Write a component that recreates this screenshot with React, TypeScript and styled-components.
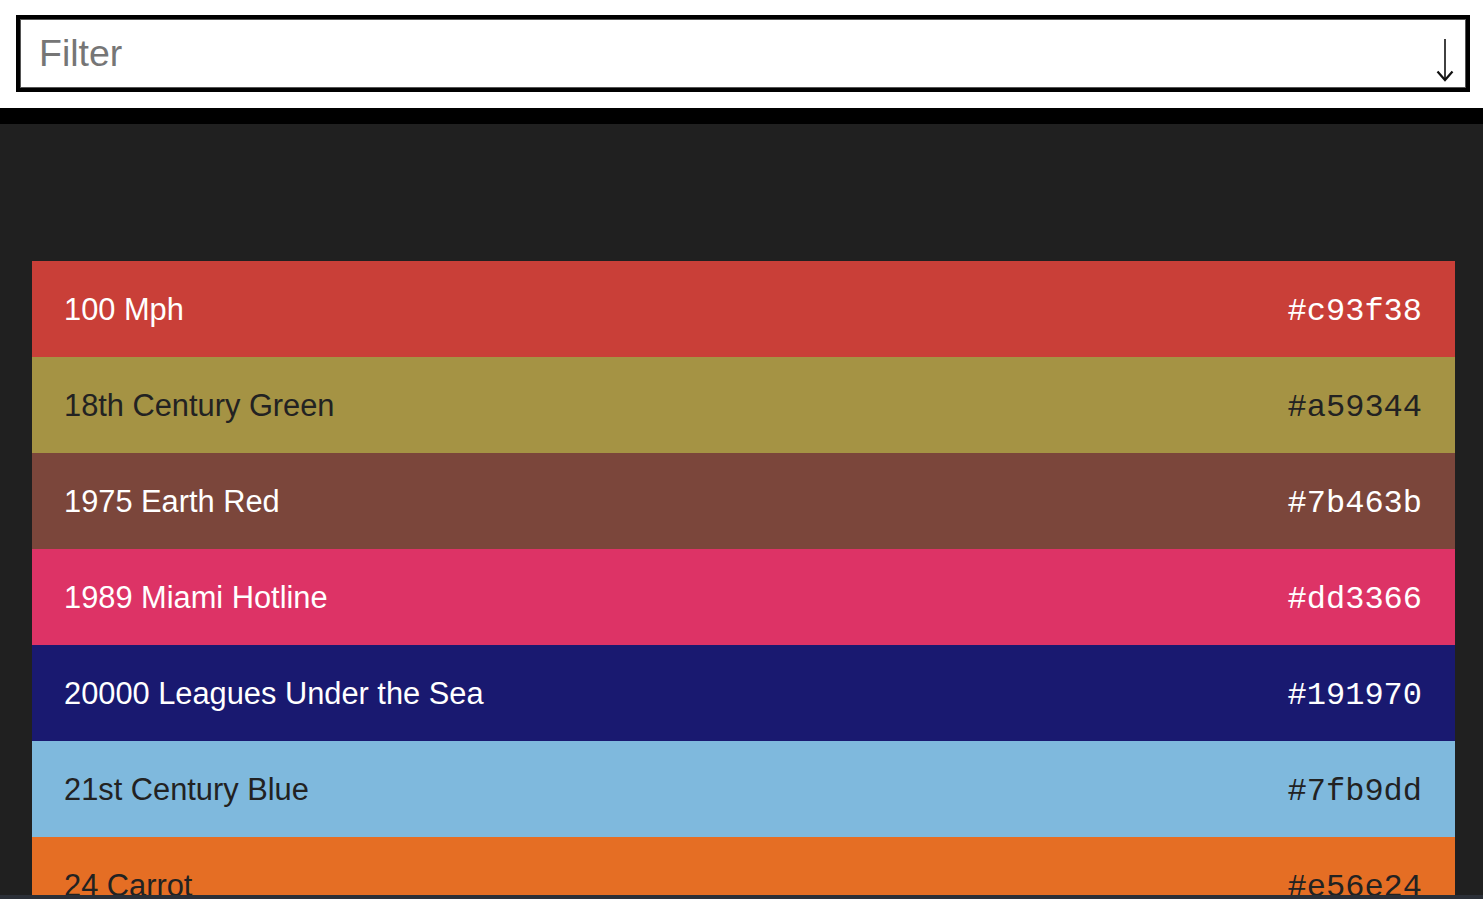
import React, { useState } from "react";
import styled, { createGlobalStyle } from "styled-components";

type Swatch = { name: string; hex: string; dark?: boolean };

const swatches: Swatch[] = [
  { name: "100 Mph", hex: "#c93f38" },
  { name: "18th Century Green", hex: "#a59344", dark: true },
  { name: "1975 Earth Red", hex: "#7b463b" },
  { name: "1989 Miami Hotline", hex: "#dd3366" },
  { name: "20000 Leagues Under the Sea", hex: "#191970" },
  { name: "21st Century Blue", hex: "#7fb9dd", dark: true },
  { name: "24 Carrot", hex: "#e56e24", dark: true },
  { name: "24 Karat", hex: "#dfc685", dark: true },
];

const GlobalStyle = createGlobalStyle`
  html, body {
    margin: 0;
    padding: 0;
    background: #202020;
    font-family: "Liberation Sans", Arial, sans-serif;
    overflow: hidden;
  }
`;

const Header = styled.header`
  background: #fff;
  padding: 15px 13px 16px 16px;
  border-bottom: 16px solid #000;
`;

const FilterBox = styled.label`
  display: flex;
  align-items: center;
  height: 77px;
  box-sizing: border-box;
  border: 4px solid #000;
  box-shadow: inset 0 0 0 1px #555;
  background: #fff;
  padding: 0 11px 0 19px;
`;

const FilterInput = styled.input`
  flex: 1;
  border: none;
  outline: none;
  background: transparent;
  font-family: "Liberation Sans", Arial, sans-serif;
  font-size: 37.5px;
  color: #222;
  padding: 0;

  &::placeholder {
    color: #767676;
  }
`;

const SortArrow = styled.svg`
  width: 20px;
  height: 44px;
  align-self: flex-end;
  margin-bottom: 6px;
`;

const Main = styled.main`
  padding: 137px 28px 0 32px;
`;

const List = styled.ul`
  list-style: none;
  margin: 0;
  padding: 0;
`;

const Row = styled.li<{ $bg: string; $dark?: boolean }>`
  display: flex;
  align-items: center;
  justify-content: space-between;
  height: 96px;
  padding: 0 33px 0 32px;
  background: ${(p) => p.$bg};
  color: ${(p) => (p.$dark ? "#222" : "#fff")};
`;

const Name = styled.span`
  font-size: 30.8px;
  padding-top: 1px;
`;

const Hex = styled.code`
  font-family: "Liberation Mono", "DejaVu Sans Mono", monospace;
  font-size: 32px;
  padding-top: 4px;
`;

const BottomBar = styled.div`
  position: fixed;
  left: 0;
  right: 0;
  bottom: 0;
  height: 4px;
  background: #2b2f37;
`;

export default function App() {
  const [query, setQuery] = useState("");
  const shown = swatches.filter((s) =>
    s.name.toLowerCase().includes(query.toLowerCase())
  );

  return (
    <>
      <GlobalStyle />
      <Header>
        <FilterBox>
          <FilterInput
            placeholder="Filter"
            value={query}
            onChange={(e) => setQuery(e.target.value)}
          />
          <SortArrow viewBox="0 0 20 44">
            <path d="M10 1 V42" stroke="#111" strokeWidth="1.6" fill="none" />
            <path d="M2.5 33.5 L10 42 L17.5 33.5" stroke="#111" strokeWidth="2.2" fill="none" />
          </SortArrow>
        </FilterBox>
      </Header>
      <Main>
        <List>
          {shown.map((s) => (
            <Row key={s.hex} $bg={s.hex} $dark={s.dark}>
              <Name>{s.name}</Name>
              <Hex>{s.hex}</Hex>
            </Row>
          ))}
        </List>
      </Main>
      <BottomBar />
    </>
  );
}
